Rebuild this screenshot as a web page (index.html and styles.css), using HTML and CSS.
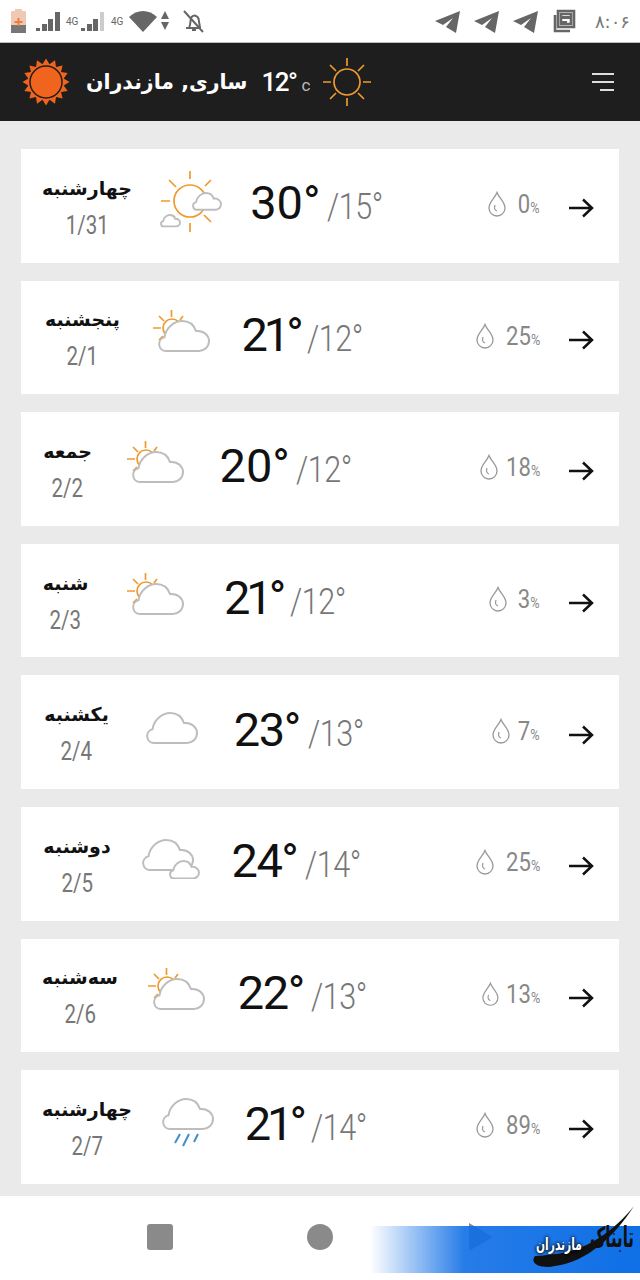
FILE: index.html
```html
<!DOCTYPE html>
<html lang="fa">
<head>
  <meta charset="UTF-8">
  <title>هواشناسی</title>
  <link rel="stylesheet" href="styles.css">
</head>
<body>
  <svg class="defs" xmlns="http://www.w3.org/2000/svg">
    <defs>
      <path id="cloud" d="M7 30a7 7 0 0 1-1.500-13.800C7 6 16 0 23 0c7 0 12 4 14 10 8-1 13 5 13 10 0 6-5 10-10 10z"/>
      <symbol id="partly" viewBox="0 0 58 46">
        <g class="sun-line">
          <circle cx="19" cy="18" r="9"/>
          <path d="M18.500 0v7M0 18h8M6 6l5 5M6 30l4-4M30 6l-3 4"/>
        </g>
        <use href="#cloud" x="6" y="11" class="cloud-line"/>
      </symbol>
      <symbol id="rays" viewBox="0 0 48 48">
        <g class="sun-line">
          <circle cx="24" cy="24" r="13"/>
          <path d="M24 0v8M24 40v8M0 24h8M40 24h8M7 7l6 6M35 35l6 6M7 41l6-6M35 13l6-6"/>
        </g>
      </symbol>
      <symbol id="drop" viewBox="0 0 20 26">
        <path d="M10 1.500C8 7 2 11 2 17a8 8 0 0 0 16 0c0-6-6-10-8-15.500z" fill="none" stroke="#999" stroke-width="1.300"/>
        <path d="M8 14c-1 3-1 5 2 6" fill="none" stroke="#999" stroke-width="1.200"/>
      </symbol>
      <symbol id="arrow" viewBox="0 0 26 20">
        <path d="M1 10h23M15 1.500l9 8.500-9 8.500" fill="none" stroke="#111" stroke-width="2.500"/>
      </symbol>
      <symbol id="plane" viewBox="0 0 26 23">
        <path d="M25 1L0 11l8 4 10-7-7 9 10 6z" fill="#666"/>
      </symbol>
    </defs>
  </svg>

  <div class="status-bar">
    <div class="status-left">
      <svg width="17" height="26" viewBox="0 0 17 26"><path d="M5 1h7v2h3a1 1 0 0 1 1 1v21H1V4a1 1 0 0 1 1-1h3z" fill="#f0c9b4"/><path d="M1 17h15v8H1z" fill="#777"/><path d="M7.500 10h2v3h3v2h-3v3h-2v-3h-3v-2h3z" fill="#ef7d3c"/></svg>
      <svg class="signal" width="25" height="21" viewBox="0 0 25 21"><path d="M0 17h4v3H0zM6 13h5v7H6zM12 8h5v12h-5zM19 1h5v19h-5z" fill="#666"/></svg>
      <span class="net">4G</span>
      <svg width="25" height="21" viewBox="0 0 25 21"><path d="M0 17h4v3H0zM6 13h5v7H6zM12 8h5v12h-5z" fill="#666"/><path d="M19 1h4v19h-4z" fill="#ccc"/></svg>
      <span class="net">4G</span>
      <svg class="wifi" width="28" height="22" viewBox="0 0 28 22"><path d="M0 7C8-1 20-1 28 7L14 22z" fill="#666"/></svg>
      <svg class="updown" width="8" height="20" viewBox="0 0 8 20"><path d="M4 0l4 8H0zM0 11h8l-4 8z" fill="#666"/></svg>
      <svg class="bell" width="24" height="24" viewBox="0 0 24 24"><path d="M4 19h15M7 18c2-2 1-6 2-9 1-2 3-3 5-2 3 1 3 4 3 6l1 5M10 21h4M2 2l19 21" fill="none" stroke="#666" stroke-width="2"/></svg>
    </div>
    <div class="status-right">
      <svg width="26" height="23"><use href="#plane"/></svg>
      <svg width="26" height="23"><use href="#plane"/></svg>
      <svg width="26" height="23"><use href="#plane"/></svg>
      <svg class="news" width="23" height="24" viewBox="0 0 23 24"><path d="M5 2h16v16H5zM8 5v10h10V5zM2 6v16h15" fill="none" stroke="#666" stroke-width="2.600"/><path d="M9 7h8v3H9zM9 12h5v2H9z" fill="#666"/></svg>
      <span class="clock">۸:۰۶</span>
    </div>
  </div>

  <header class="top-bar">
    <svg class="logo-sun" width="48" height="48" viewBox="-24 -24 48 48">
      <polygon fill="#f0641e" points="23.500,0 17.700,3.500 21.700,9 15,10 16.600,16.600 10,15 9,21.700 3.500,17.700 0,23.500 -3.500,17.700 -9,21.700 -10,15 -16.600,16.600 -15,10 -21.700,9 -17.700,3.500 -23.500,0 -17.700,-3.500 -21.700,-9 -15,-10 -16.600,-16.600 -10,-15 -9,-21.700 -3.500,-17.700 0,-23.500 3.500,-17.700 9,-21.700 10,-15 16.600,-16.600 15,-10 21.700,-9 17.700,-3.500"/>
      <circle r="16" fill="#f0641e" stroke="#1e1e1e" stroke-width="1.500"/>
    </svg>
    <div class="city" dir="rtl">ساری, مازندران</div>
    <div class="now">12°</div>
    <div class="unit">c</div>
    <svg class="now-icon" width="48" height="48"><use href="#rays"/></svg>
    <div class="menu"><span></span><span></span><span class="short"></span></div>
  </header>

  <main class="days">
    <div class="day-card">
      <div class="day"><div class="name" dir="rtl">چهارشنبه</div><div class="date">1/31</div></div>
      <i class="gap"></i>
      <svg class="w-icon" width="62" height="61" viewBox="0 0 62 61">
        <g class="sun-line">
          <circle cx="30" cy="30" r="16"/>
          <path d="M30 0v8M30 52v9M1 30h9M9 9l7 7M51 9l-6 6M51 51l-7-7M9 51l6-6"/>
        </g>
        <use href="#cloud" transform="translate(33 22) scale(.56)" class="cloud-line thick"/>
        <use href="#cloud" transform="translate(1 44) scale(.38)" class="cloud-line thicker"/>
      </svg>
      <i class="gap"></i>
      <div class="temps"><span class="high">30°</span><span class="low">/15°</span></div>
      <i class="gap wide"></i>
      <div class="rain"><svg width="20" height="26"><use href="#drop"/></svg><span class="pct">0<small>%</small></span></div>
      <svg class="go" width="26" height="20"><use href="#arrow"/></svg>
    </div>
    <div class="day-card">
      <div class="day"><div class="name" dir="rtl">پنجشنبه</div><div class="date">2/1</div></div>
      <i class="gap"></i>
      <svg class="w-icon" width="58" height="46"><use href="#partly"/></svg>
      <i class="gap"></i>
      <div class="temps"><span class="high">21°</span><span class="low">/12°</span></div>
      <i class="gap wide"></i>
      <div class="rain"><svg width="20" height="26"><use href="#drop"/></svg><span class="pct">25<small>%</small></span></div>
      <svg class="go" width="26" height="20"><use href="#arrow"/></svg>
    </div>
    <div class="day-card">
      <div class="day"><div class="name" dir="rtl">جمعه</div><div class="date">2/2</div></div>
      <i class="gap"></i>
      <svg class="w-icon" width="58" height="46"><use href="#partly"/></svg>
      <i class="gap"></i>
      <div class="temps"><span class="high">20°</span><span class="low">/12°</span></div>
      <i class="gap wide"></i>
      <div class="rain"><svg width="20" height="26"><use href="#drop"/></svg><span class="pct">18<small>%</small></span></div>
      <svg class="go" width="26" height="20"><use href="#arrow"/></svg>
    </div>
    <div class="day-card">
      <div class="day"><div class="name" dir="rtl">شنبه</div><div class="date">2/3</div></div>
      <i class="gap"></i>
      <svg class="w-icon" width="58" height="46"><use href="#partly"/></svg>
      <i class="gap"></i>
      <div class="temps"><span class="high">21°</span><span class="low">/12°</span></div>
      <i class="gap wide"></i>
      <div class="rain"><svg width="20" height="26"><use href="#drop"/></svg><span class="pct">3<small>%</small></span></div>
      <svg class="go" width="26" height="20"><use href="#arrow"/></svg>
    </div>
    <div class="day-card">
      <div class="day"><div class="name" dir="rtl">یکشنبه</div><div class="date">2/4</div></div>
      <i class="gap"></i>
      <svg class="w-icon" width="54" height="34" viewBox="0 0 54 34"><use href="#cloud" x="2" y="2" class="cloud-line"/></svg>
      <i class="gap"></i>
      <div class="temps"><span class="high">23°</span><span class="low">/13°</span></div>
      <i class="gap wide"></i>
      <div class="rain"><svg width="20" height="26"><use href="#drop"/></svg><span class="pct">7<small>%</small></span></div>
      <svg class="go" width="26" height="20"><use href="#arrow"/></svg>
    </div>
    <div class="day-card">
      <div class="day"><div class="name" dir="rtl">دوشنبه</div><div class="date">2/5</div></div>
      <i class="gap"></i>
      <svg class="w-icon" width="58" height="40" viewBox="0 0 58 40">
        <use href="#cloud" x="1" y="1" class="cloud-line"/>
        <use href="#cloud" transform="translate(28 22) scale(.58)" class="cloud-line thick"/>
      </svg>
      <i class="gap"></i>
      <div class="temps"><span class="high">24°</span><span class="low">/14°</span></div>
      <i class="gap wide"></i>
      <div class="rain"><svg width="20" height="26"><use href="#drop"/></svg><span class="pct">25<small>%</small></span></div>
      <svg class="go" width="26" height="20"><use href="#arrow"/></svg>
    </div>
    <div class="day-card">
      <div class="day"><div class="name" dir="rtl">سه‌شنبه</div><div class="date">2/6</div></div>
      <i class="gap"></i>
      <svg class="w-icon" width="58" height="46"><use href="#partly"/></svg>
      <i class="gap"></i>
      <div class="temps"><span class="high">22°</span><span class="low">/13°</span></div>
      <i class="gap wide"></i>
      <div class="rain"><svg width="20" height="26"><use href="#drop"/></svg><span class="pct">13<small>%</small></span></div>
      <svg class="go" width="26" height="20"><use href="#arrow"/></svg>
    </div>
    <div class="day-card">
      <div class="day"><div class="name" dir="rtl">چهارشنبه</div><div class="date">2/7</div></div>
      <i class="gap"></i>
      <svg class="w-icon" width="54" height="50" viewBox="0 0 54 50">
        <use href="#cloud" x="2" y="2" class="cloud-line"/>
        <path d="M19 37l-5 9M28 37l-6 12M37 37l-4 8" fill="none" stroke="#3f8fc9" stroke-width="2"/>
      </svg>
      <i class="gap"></i>
      <div class="temps"><span class="high">21°</span><span class="low">/14°</span></div>
      <i class="gap wide"></i>
      <div class="rain"><svg width="20" height="26"><use href="#drop"/></svg><span class="pct">89<small>%</small></span></div>
      <svg class="go" width="26" height="20"><use href="#arrow"/></svg>
    </div>
  </main>

  <nav class="nav-bar">
    <span class="nav-square"></span>
    <span class="nav-circle"></span>
    <svg width="24" height="28" viewBox="0 0 24 28"><path d="M0 0l24 14L0 28z" fill="#8a8a8a"/></svg>
    <div class="stamp">
      <svg class="swoosh" width="110" height="64" viewBox="0 0 110 64"><path d="M8 50C2 58 14 63 28 60 60 56 88 30 107 0 88 24 60 44 30 48 20 49 12 50 8 50z" fill="#111"/></svg>
      <span class="stamp-region" dir="rtl">مازندران</span>
      <span class="stamp-name" dir="rtl">تابناک</span>
    </div>
  </nav>
</body>
</html>
```

FILE: styles.css
```css
* {
  box-sizing: border-box;
}
body {
  margin: 0;
  width: 640px;
  height: 1280px;
  display: flex;
  flex-direction: column;
  background: #eaeaea;
  font-family: Roboto, sans-serif;
  overflow: hidden;
}
.defs {
  display: none;
}
.sun-line {
  fill: none;
  stroke: #ef9a2f;
  stroke-width: 1.700;
}
.cloud-line {
  fill: #fff;
  stroke: #bdbdbd;
  stroke-width: 2;
}
.cloud-line.thick {
  stroke-width: 3.400;
}
.cloud-line.thicker {
  stroke-width: 5;
}

/* status bar */
.status-bar {
  height: 43px;
  flex: none;
  display: flex;
  align-items: center;
  justify-content: space-between;
  padding: 0 10px;
  background: #fff;
  border-bottom: 1px solid #bbb;
}
.status-left,
.status-right {
  display: flex;
  align-items: center;
}
.signal {
  margin-left: 9px;
}
.net {
  width: 20px;
  padding-left: 5px;
  font-size: 10px;
  color: #666;
}
.wifi {
  margin-left: 3px;
}
.updown {
  margin-left: 4px;
}
.bell {
  margin-left: 13px;
}
.status-right {
  gap: 13px;
}
.news {
  margin-left: 1px;
}
.clock {
  margin-left: 6px;
  font-family: "DejaVu Sans", sans-serif;
  font-size: 18px;
  color: #777;
}

/* header */
.top-bar {
  height: 78px;
  flex: none;
  display: flex;
  align-items: center;
  padding: 0 26px 0 22px;
  background: #1e1e1e;
  color: #fff;
}
.city {
  margin-left: 16px;
  font-family: "DejaVu Sans", sans-serif;
  font-size: 20.500px;
  font-weight: bold;
}
.now {
  margin-left: 14px;
  font-size: 26px;
  font-weight: 500;
  letter-spacing: -1.500px;
}
.unit {
  margin: 5px 0 0 5px;
  font-size: 17px;
  color: #bbb;
}
.now-icon {
  margin-left: 13px;
}
.menu {
  margin-left: auto;
  width: 22px;
  display: flex;
  flex-direction: column;
  align-items: flex-end;
  gap: 6px;
}
.menu span {
  width: 100%;
  height: 2px;
  background: #ddd;
}
.menu .short {
  width: 14px;
}

/* day list */
.days {
  flex: 1;
  display: flex;
  flex-direction: column;
  gap: 18px;
  padding: 28px 21px 0;
}
.day-card {
  height: 113.600px;
  flex: none;
  display: flex;
  align-items: center;
  padding: 0 25px 0 22px;
  background: #fff;
}
.day-card:nth-child(1) { --day: 88px; --high: 69px; --spread: 0; --rain: 53px; }
.day-card:nth-child(2) { --day: 79px; --high: 58px; --spread: -4px; --rain: 65px; }
.day-card:nth-child(3) { --day: 49px; --high: 69px; --spread: 0; --rain: 61px; }
.day-card:nth-child(4) { --day: 45px; --high: 58px; --spread: -4px; --rain: 52px; }
.day-card:nth-child(5) { --day: 67px; --high: 66px; --spread: -1.500px; --rain: 49px; }
.day-card:nth-child(6) { --day: 68px; --high: 66px; --spread: -1.500px; --rain: 65px; }
.day-card:nth-child(7) { --day: 74px; --high: 65px; --spread: -1.500px; --rain: 59px; }
.day-card:nth-child(8) { --day: 88px; --high: 58px; --spread: -4px; --rain: 65px; }
.gap {
  flex: 1;
}
.gap.wide {
  flex: 3.700;
}
.day {
  flex: none;
  width: var(--day);
  margin-top: 2px;
  display: flex;
  flex-direction: column;
  align-items: center;
  white-space: nowrap;
}
.name {
  font-family: "DejaVu Sans", sans-serif;
  font-size: 19px;
  line-height: 36px;
  font-weight: bold;
  color: #111;
}
.date {
  margin-top: 2px;
  font-size: 25px;
  line-height: 36px;
  color: #777;
  transform: scaleX(.82);
}
.w-icon {
  flex: none;
  margin-top: -9px;
}
.temps {
  flex: none;
  display: flex;
  align-items: baseline;
  margin-top: -6px;
  white-space: nowrap;
}
.high {
  width: var(--high);
  font-size: 47px;
  letter-spacing: var(--spread);
  color: #111;
}
.low {
  width: 54px;
  margin-left: 8px;
  font-size: 36px;
  font-weight: 300;
  letter-spacing: -.500px;
  color: #777;
  transform: scaleX(.85);
  transform-origin: left;
}
.rain {
  flex: none;
  width: var(--rain);
  margin-top: -3px;
  display: flex;
  align-items: center;
  justify-content: space-between;
}
.pct {
  font-size: 26px;
  color: #888;
  transform: scaleX(.85);
  transform-origin: right;
}
.pct small {
  font-size: 15px;
}
.go {
  flex: none;
  margin: 5px 0 0 28px;
}

/* bottom nav */
.nav-bar {
  position: relative;
  height: 84px;
  flex: none;
  display: flex;
  align-items: center;
  justify-content: space-between;
  padding: 0 147px 2px;
  background: #fff;
}
.nav-square {
  width: 26px;
  height: 26px;
  border-radius: 3px;
  background: #8a8a8a;
}
.nav-circle {
  width: 26px;
  height: 26px;
  margin-right: 3px;
  border-radius: 50%;
  background: #8a8a8a;
}
.stamp {
  position: absolute;
  top: 30px;
  right: 0;
  width: 270px;
  height: 47px;
  background: linear-gradient(to right, rgba(15, 110, 230, 0), rgba(15, 110, 230, .9) 35%, #0f6fe6 100%);
}
.swoosh {
  position: absolute;
  right: 3px;
  top: -20px;
}
.stamp-region {
  position: absolute;
  left: 166px;
  top: 8px;
  font-family: "DejaVu Sans", sans-serif;
  font-size: 13px;
  font-weight: bold;
  color: #fff;
  text-shadow: 0 0 3px #000, 0 0 3px #000;
  transform: scale(.82, 1.300);
  transform-origin: left top;
}
.stamp-name {
  position: absolute;
  right: 6px;
  top: -6px;
  font-family: "DejaVu Sans", sans-serif;
  font-size: 15px;
  font-weight: bold;
  color: #111;
  transform: scaleY(1.900);
  transform-origin: right top;
}
```
